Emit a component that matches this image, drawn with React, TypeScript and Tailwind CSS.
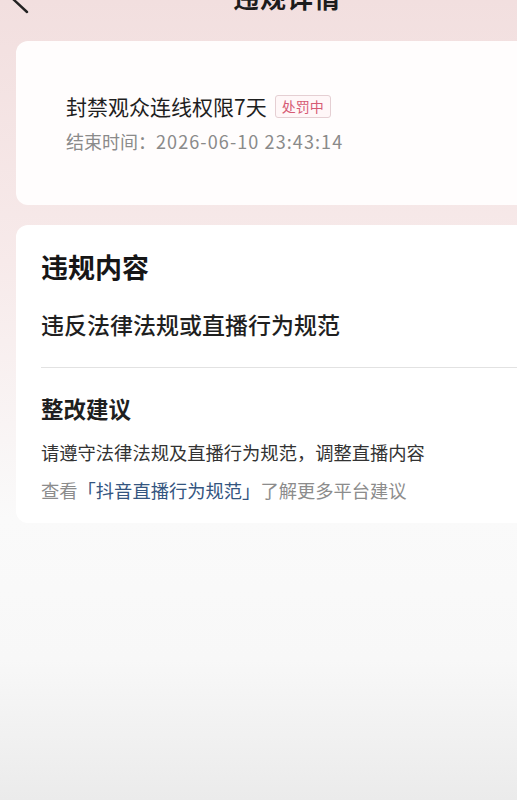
import React from "react";

export default function App() {
  const font = { fontFamily: '"Noto Sans CJK SC", "Noto Sans", sans-serif' };
  return (
    <div className="relative w-[517px] h-[800px] overflow-hidden bg-[#f9f9f9]" style={font}>
      <div className="absolute inset-x-0 top-0 h-[520px] bg-gradient-to-b from-[#f2dfdf] via-[#f7eaea] to-[#fafafa]" />
      <div className="absolute inset-x-0 top-[520px] bottom-0 bg-gradient-to-b from-[#fafafa] via-[#f8f8f8] to-[#ebebeb]" />
      <div className="relative flex flex-col">
        {/* header */}
        <div className="relative h-[40px] mt-[-23px] flex items-center">
          <svg className="absolute left-[10px] top-[7px]" width="20" height="30" viewBox="0 0 20 30" fill="none">
            <path d="M17 2 L3 15 L17 28" stroke="#222" strokeWidth="2.4" strokeLinecap="round" strokeLinejoin="round" />
          </svg>
          <div className="absolute left-[233px] text-[26px] font-semibold text-[#1c1c1c] leading-[40px] tracking-[1px]">违规详情</div>
        </div>

        {/* card 1 */}
        <div className="ml-4 mt-[24px] w-[560px] h-[164px] rounded-[12px] bg-[#fffdfd] pl-[50px] pt-[50px]">
          <div className="flex items-center">
            <span className="text-[21px] leading-[30px] text-[#1f1f1f]">封禁观众连线权限7天</span>
            <span className="ml-[8px] h-[23px] px-[6px] flex items-center rounded-[3px] border border-[#e5cfd3] bg-[#fff7f8] text-[14px] text-[#d65a74] leading-none">处罚中</span>
          </div>
          <div className="mt-[7px] text-[18px] leading-[26px] text-[#8a8a8a]">
            结束时间：<span className="tracking-[1.1px]">2026-06-10 23:43:14</span>
          </div>
        </div>

        {/* card 2 */}
        <div className="ml-4 mt-[20px] w-[560px] h-[298px] rounded-[12px] bg-white pl-[25px] pt-[24px]">
          <div className="text-[27px] leading-[36px] font-semibold text-[#161616]">违规内容</div>
          <div className="mt-[24px] text-[23px] leading-[30px] font-medium text-[#1f1f1f]">违反法律法规或直播行为规范</div>
          <div className="mt-[28px] h-px bg-[#e2e2e2]" />
          <div className="mt-[25px] text-[22.5px] leading-[30px] font-semibold text-[#1f1f1f]">整改建议</div>
          <div className="mt-[16px] text-[18.3px] leading-[26px] text-[#333333]">请遵守法律法规及直播行为规范，调整直播内容</div>
          <div className="mt-[12px] text-[18.3px] leading-[26px] text-[#8c8c8c]">
            查看<span className="text-[#34557f]">「抖音直播行为规范」</span>了解更多平台建议
          </div>
        </div>
      </div>
    </div>
  );
}
